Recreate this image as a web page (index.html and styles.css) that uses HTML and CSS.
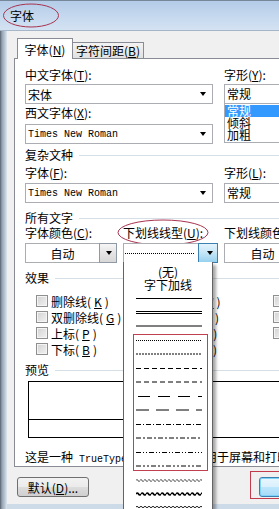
FILE: index.html
```html
<!DOCTYPE html>
<html lang="zh-CN">
<head>
    <meta charset="UTF-8">
    <meta name="viewport" content="width=device-width, initial-scale=1.0">
    <title>字体</title>
    <link rel="stylesheet" href="styles.css">
</head>
<body>
    <div class="window">
        <div class="titlebar">字体</div>
        <svg class="mark-title" width="58" height="25" viewBox="0 0 58 25"><ellipse cx="29" cy="12.5" rx="27.5" ry="11.5"/></svg>

        <div class="frame">
            <div class="frame-left"></div>
            <div class="client">
                <div class="tabs">
                    <div class="tab active">字体(<u>N</u>)</div>
                    <div class="tab">字符间距(<u>B</u>)</div>
                </div>

                <div class="panel">
                    <div class="row">
                        <div class="col-main">
                            <div class="lbl">中文字体(<u>T</u>):</div>
                            <div class="combo"><span>宋体</span><i class="caret"></i></div>
                            <div class="lbl second">西文字体(<u>X</u>):</div>
                            <div class="combo mono"><span>Times New Roman</span><i class="caret"></i></div>
                        </div>
                        <div class="col-side">
                            <div class="lbl">字形(<u>Y</u>):</div>
                            <div class="field">常规</div>
                            <div class="listbox">
                                <div class="item selected">常规</div>
                                <div class="item">倾斜</div>
                                <div class="item">加粗</div>
                            </div>
                        </div>
                    </div>

                    <div class="group g-complex">复杂文种</div>
                    <div class="row low r-complex">
                        <div class="col-main">
                            <div class="lbl">字体(<u>F</u>):</div>
                            <div class="combo mono"><span>Times New Roman</span><i class="caret"></i></div>
                        </div>
                        <div class="col-side">
                            <div class="lbl">字形(<u>L</u>):</div>
                            <div class="field">常规</div>
                        </div>
                    </div>

                    <div class="group g-all">所有文字</div>
                    <div class="row low three">
                        <div class="col-a">
                            <div class="lbl">字体颜色(<u>C</u>):</div>
                            <div class="combo pick"><span>自动</span><i class="dd-btn"><i class="caret"></i></i></div>
                        </div>
                        <div class="col-b">
                            <div class="lbl marked">下划线线型(<u>U</u>):
                                <svg class="mark-ul" width="92" height="27" viewBox="0 0 92 27"><ellipse cx="46" cy="13.5" rx="45" ry="12.5"/></svg>
                            </div>
                            <div class="combo pick open">
                                <svg class="ln sample" viewBox="0 0 69 6"><line x1="0" y1="3.5" x2="69" y2="3.5" stroke-dasharray="1 1"/></svg>
                                <i class="dd-btn"><i class="caret"></i></i>
                                <div class="dropdown">
                                    <div class="opt-text">(无)</div>
                                    <div class="opt-text">字下加线</div>
                                    <div class="opt"><svg class="ln" viewBox="0 0 66 6"><line x1="0" y1="3.5" x2="66" y2="3.5"/></svg></div>
                                    <div class="opt"><svg class="ln" viewBox="0 0 66 6"><line x1="0" y1="2.5" x2="66" y2="2.5"/><line x1="0" y1="4.5" x2="66" y2="4.5"/></svg></div>
                                    <div class="opt"><svg class="ln" viewBox="0 0 66 6"><line x1="0" y1="3" x2="66" y2="3" stroke-width="2"/></svg></div>
                                    <div class="opt"><svg class="ln" viewBox="0 0 66 6"><line x1="0" y1="3.5" x2="66" y2="3.5" stroke-dasharray="1 1"/></svg></div>
                                    <div class="opt"><svg class="ln" viewBox="0 0 66 6"><line x1="0" y1="3" x2="66" y2="3" stroke-width="2" stroke-dasharray="2 1"/></svg></div>
                                    <div class="opt"><svg class="ln" viewBox="0 0 66 6"><line x1="0" y1="3.5" x2="66" y2="3.5" stroke-dasharray="5 3"/></svg></div>
                                    <div class="opt"><svg class="ln" viewBox="0 0 66 6"><line x1="0" y1="3" x2="66" y2="3" stroke-width="2" stroke-dasharray="5 3"/></svg></div>
                                    <div class="opt"><svg class="ln" viewBox="0 0 66 6"><line x1="2" y1="3.5" x2="66" y2="3.5" stroke-dasharray="12 8"/></svg></div>
                                    <div class="opt"><svg class="ln" viewBox="0 0 66 6"><line x1="0" y1="3" x2="66" y2="3" stroke-width="2" stroke-dasharray="13 7"/></svg></div>
                                    <div class="opt"><svg class="ln" viewBox="0 0 66 6"><line x1="0" y1="3.5" x2="66" y2="3.5" stroke-dasharray="5 2 1 2"/></svg></div>
                                    <div class="opt"><svg class="ln" viewBox="0 0 66 6"><line x1="0" y1="3" x2="66" y2="3" stroke-width="2" stroke-dasharray="5 2 2 2"/></svg></div>
                                    <div class="opt"><svg class="ln" viewBox="0 0 66 6"><line x1="0" y1="3.5" x2="66" y2="3.5" stroke-dasharray="5 2 1 2 1 2"/></svg></div>
                                    <div class="opt"><svg class="ln" viewBox="0 0 66 6"><line x1="0" y1="3" x2="66" y2="3" stroke-width="2" stroke-dasharray="5 2 2 2 2 2"/></svg></div>
                                    <div class="opt"><svg class="ln" viewBox="0 0 66 6"><defs><pattern id="wv1" width="4" height="6" patternUnits="userSpaceOnUse"><path d="M0 3.5 Q1 1.5 2 3.5 T4 3.5" fill="none" stroke="#000" stroke-width="0.9"/></pattern></defs><rect width="66" height="6" fill="url(#wv1)"/></svg></div>
                                    <div class="opt"><svg class="ln" viewBox="0 0 66 6"><defs><pattern id="wv2" width="5" height="6" patternUnits="userSpaceOnUse"><path d="M0 3 Q1.25 1 2.5 3 T5 3" fill="none" stroke="#000" stroke-width="1.7"/></pattern></defs><rect width="66" height="6" fill="url(#wv2)"/></svg></div>
                                    <div class="opt"><svg class="ln" viewBox="0 0 66 6"><defs><pattern id="wv3" width="4" height="6" patternUnits="userSpaceOnUse"><path d="M0 2 Q1 0.5 2 2 T4 2 M0 5 Q1 3.5 2 5 T4 5" fill="none" stroke="#000" stroke-width="0.9"/></pattern></defs><rect width="66" height="6" fill="url(#wv3)"/></svg></div>
                                    <span class="mark-list"></span>
                                </div>
                            </div>
                        </div>
                        <div class="col-c">
                            <div class="lbl">下划线颜色(<u>I</u>):</div>
                            <div class="combo pick"><span>自动</span><i class="dd-btn"><i class="caret"></i></i></div>
                        </div>
                    </div>

                    <div class="group g-effects">效果</div>
                    <div class="effects">
                        <div class="chk"><i class="cb"></i>删除线(<u>K</u>)</div>
                        <div class="chk"><i class="cb"></i>双删除线(<u>G</u>)</div>
                        <div class="chk"><i class="cb"></i>上标(<u>P</u>)</div>
                        <div class="chk"><i class="cb"></i>下标(<u>B</u>)</div>
                        <div class="chk"><i class="cb"></i>阴影(<u>W</u>)</div>
                        <div class="chk"><i class="cb"></i>空心(<u>O</u>)</div>
                        <div class="chk"><i class="cb"></i>阳文(<u>E</u>)</div>
                        <div class="chk"><i class="cb"></i>阴文(<u>V</u>)</div>
                        <div class="chk"><i class="cb"></i>小型大写字母(<u>M</u>)</div>
                        <div class="chk"><i class="cb"></i>全部大写字母(<u>A</u>)</div>
                        <div class="chk"><i class="cb"></i>隐藏(<u>H</u>)</div>
                    </div>

                    <div class="group g-preview">预览</div>
                    <div class="preview"><div class="preview-line"></div></div>
                    <div class="note">这是一种<span class="mono"> TrueType </span>字体，同时适用于屏幕和打印机。</div>
                </div>

                <div class="buttons">
                    <button class="btn">默认(<u>D</u>)...</button>
                    <div class="ok-wrap">
                        <button class="btn ok">确定</button>
                        <span class="mark-ok"></span>
                    </div>
                </div>
            </div>
        </div>
    </div>
</body>
</html>
```

FILE: styles.css
```css
* {
    box-sizing: border-box;
}
body {
    margin: 0;
    width: 279px;
    height: 509px;
    overflow: hidden;
    font-family: "Noto Sans CJK SC", sans-serif;
    font-size: 12px;
    color: #000;
    background: #f0f0f0;
}
u {
    text-decoration: underline;
}
.mono {
    font-family: "Liberation Mono", "DejaVu Sans Mono", monospace;
    font-size: 10px;
}
.window {
    position: relative;
    width: 440px;
    height: 509px;
}
.titlebar {
    height: 31px;
    padding-left: 10px;
    line-height: 29px;
    border-top: 1px solid #76879a;
    border-bottom: 1px solid #a6b6c8;
    background: linear-gradient(#b4cce8, #d4e3f3);
}
.mark-title {
    position: absolute;
    left: 2px;
    top: 3px;
}
.mark-title ellipse,
.mark-ul ellipse {
    fill: none;
    stroke: #a8334f;
    stroke-width: 1;
}
.frame {
    display: flex;
    height: 478px;
}
.frame-left {
    width: 7px;
    background: linear-gradient(to right, #56616e, #95a3b2 2px, #bccad8 5px, #dfe7ef);
}
.client {
    flex: 1;
    padding: 7px 0 0 7px;
    border-bottom: 5px solid #cddbe9;
}

/* tabs */
.tabs {
    display: flex;
    align-items: flex-end;
    height: 21px;
    margin: 0 0 -1px 3px;
    position: relative;
    z-index: 1;
}
.tab {
    height: 16px;
    margin-bottom: 1px;
    margin-left: -1px;
    padding: 0 3px;
    line-height: 15px;
    border: 1px solid #898c95;
    border-bottom: none;
    background: linear-gradient(#f3f3f3, #e1e1e1);
    white-space: nowrap;
}
.tab.active {
    width: 56px;
    height: 21px;
    margin: 0;
    padding-top: 3px;
    text-align: center;
    line-height: 15px;
    background: #fff;
    position: relative;
    z-index: 2;
}
.panel {
    height: 409px;
    padding: 9px 0 0 10px;
    border: 1px solid #898c95;
    background: #fff;
}

/* form rows */
.row {
    display: flex;
    gap: 11px;
}
.row.three {
    gap: 6px;
}
.col-main {
    width: 188px;
}
.col-side {
    width: 94px;
}
.col-a {
    width: 92px;
}
.col-b {
    width: 95px;
}
.col-c {
    width: 94px;
}
.lbl {
    height: 14px;
    line-height: 14px;
    margin-bottom: 2px;
    white-space: nowrap;
}
.lbl.second {
    margin-top: 2px;
    margin-bottom: 4px;
}
.row.low .lbl {
    margin-bottom: 3px;
}
.r-complex {
    margin-top: 4px;
}
.three {
    margin-top: 1px;
}
.marked {
    position: relative;
}
.mark-ul {
    position: absolute;
    left: -6px;
    top: -7px;
}
.combo {
    position: relative;
    display: flex;
    align-items: center;
    height: 20px;
    padding-left: 2px;
    border: 1px solid #abadb3;
    background: #fff;
    white-space: nowrap;
}
.caret {
    position: absolute;
    right: 6px;
    top: 7px;
    width: 0;
    height: 0;
    border-left: 3.5px solid transparent;
    border-right: 3.5px solid transparent;
    border-top: 4px solid #000;
}
.combo.pick {
    padding-left: 0;
}
.combo.pick span {
    flex: 1;
    text-align: center;
}
.dd-btn {
    position: relative;
    align-self: stretch;
    width: 18px;
    margin: -1px -1px -1px auto;
    border: 1px solid #8f9aa6;
    background: linear-gradient(#f6f6f6, #e4e4e4 50%, #d8d8d8);
}
.dd-btn .caret {
    right: 4px;
    top: 7px;
}
.open .dd-btn {
    width: 20px;
    border-color: #3c7fb1;
    background: linear-gradient(#e5f4fc, #c4e5f6 50%, #98d1ef);
}
.sample {
    margin-left: 1px;
}
.field {
    height: 20px;
    padding-left: 2px;
    line-height: 18px;
    border: 1px solid #abadb3;
    background: #fff;
}
.listbox {
    margin-top: -1px;
    padding: 1px 0;
    border: 1px solid #abadb3;
    background: #fff;
}
.item {
    height: 12px;
    padding-left: 2px;
    line-height: 12px;
}
.item.selected {
    background: #3399ff;
    color: #fff;
}

/* group headings */
.group {
    display: flex;
    align-items: center;
    gap: 6px;
    height: 14px;
    line-height: 14px;
    white-space: nowrap;
}
.group::after {
    content: "";
    flex: 1;
    border-top: 1px solid #d5dfe5;
}
.g-complex {
    margin-top: 4px;
}
.g-all,
.g-effects {
    margin-top: 8px;
}
.g-preview {
    margin-top: 6px;
}

/* underline dropdown */
.ln {
    display: block;
    width: 66px;
    height: 6px;
}
.ln.sample {
    width: 69px;
}
.ln line {
    stroke: #000;
    stroke-width: 1;
}
.dropdown {
    position: absolute;
    z-index: 5;
    left: -1px;
    top: 18px;
    width: 90px;
    height: 260px;
    padding-top: 3px;
    border: 1px solid #646464;
    border-top: none;
    background: #fff;
    box-shadow: 3px 3px 3px rgba(0, 0, 0, 0.35);
}
.opt-text {
    height: 13px;
    line-height: 13px;
    text-align: center;
}
.opt {
    display: flex;
    align-items: center;
    height: 14px;
    padding-left: 12px;
}
.mark-list {
    position: absolute;
    left: 9px;
    top: 72px;
    width: 75px;
    height: 137px;
    border: 1px solid #c0404f;
}

/* effects */
.effects {
    display: grid;
    grid-template-columns: 121px 116px 120px;
    grid-template-rows: repeat(4, 16px);
    grid-auto-flow: column;
    margin: 8px 0 0 11px;
}
.chk {
    display: flex;
    align-items: center;
    gap: 3px;
    white-space: nowrap;
}
.cb {
    width: 12px;
    height: 12px;
    border: 1px solid #8e8f8f;
    background: linear-gradient(135deg, #d2d2d2, #f2f2f2);
    box-shadow: inset 0 0 0 1px #f4f4f4;
}

/* preview */
.preview {
    height: 57px;
    margin: 4px 0 0 3px;
    border: 1px solid #000;
    border-right: none;
}
.preview-line {
    width: 95px;
    margin-top: 37px;
    border-top: 1px solid #000;
}
.note {
    height: 14px;
    margin-top: 12px;
    line-height: 14px;
    white-space: nowrap;
}

/* buttons */
.buttons {
    display: flex;
    margin: 10px 0 0 3px;
}
.btn {
    width: 72px;
    height: 20px;
    padding: 0;
    font: inherit;
    color: #000;
    border: 1px solid #707070;
    border-radius: 3px;
    background: linear-gradient(#f2f2f2, #ebebeb 50%, #dddddd 51%, #cfcfcf);
}
.ok-wrap {
    position: relative;
    margin-left: 170px;
}
.btn.ok {
    width: 75px;
    border-color: #3c7fb1;
    background: linear-gradient(#eaf6fd, #d9f0fc 50%, #bee6fd 51%, #a7d9f5);
    box-shadow: inset 0 0 0 1px #7fd3f8;
}
.mark-ok {
    position: absolute;
    left: -9px;
    top: -6px;
    width: 100px;
    height: 28px;
    border: 1px solid #c23b4c;
}
```
